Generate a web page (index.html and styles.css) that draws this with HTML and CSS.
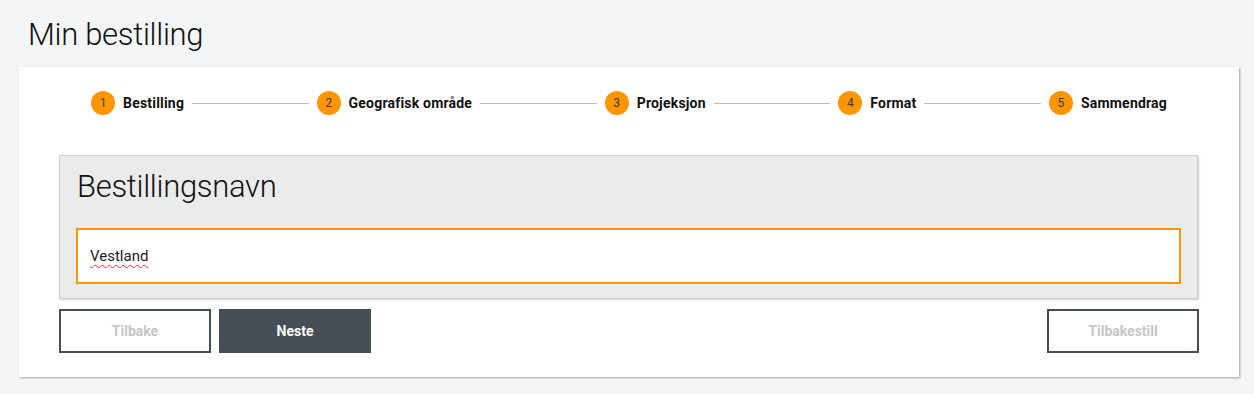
FILE: index.html
```html
<!DOCTYPE html>
<html lang="no">
<head>
<meta charset="utf-8">
<title>Min bestilling</title>
<link rel="stylesheet" href="styles.css">
</head>
<body>
<h1 class="page-title">Min bestilling</h1>
<div class="card">
  <ol class="stepper">
    <li class="step"><span class="num">1</span><span class="label">Bestilling</span></li>
    <li class="line"></li>
    <li class="step"><span class="num">2</span><span class="label">Geografisk område</span></li>
    <li class="line"></li>
    <li class="step"><span class="num">3</span><span class="label">Projeksjon</span></li>
    <li class="line"></li>
    <li class="step"><span class="num">4</span><span class="label">Format</span></li>
    <li class="line"></li>
    <li class="step"><span class="num">5</span><span class="label">Sammendrag</span></li>
  </ol>
  <section class="panel">
    <h2 class="panel-title">Bestillingsnavn</h2>
    <div class="field"><span class="value">Vestland</span></div>
  </section>
  <div class="actions">
    <button class="btn btn-outline">Tilbake</button>
    <button class="btn btn-solid">Neste</button>
    <span class="spacer"></span>
    <button class="btn btn-outline">Tilbakestill</button>
  </div>
</div>
</body>
</html>
```
FILE: styles.css
```css
html, body {
  margin: 0;
  padding: 0;
}
body {
  background: #f4f5f7;
  font-family: Roboto, "Liberation Sans", sans-serif;
  color: #111;
  width: 1254px;
  height: 394px;
  overflow: hidden;
}
.page-title {
  margin: 15px 0 12px 28px;
  font-weight: 300;
  font-size: 31px;
  letter-spacing: -0.3px;
  line-height: 40px;
  color: #111;
}
.card {
  margin: 0 15px 0 19px;
  background: #fff;
  box-shadow: 1px 1px 2px rgba(0,0,0,0.35);
  padding: 24px 40px 24px 40px;
}
.stepper {
  list-style: none;
  margin: 0 32px 40px 32px;
  padding: 0;
  display: flex;
  align-items: center;
  height: 24px;
}
.step {
  display: flex;
  align-items: center;
  gap: 8px;
}
.num {
  width: 24px;
  height: 24px;
  border-radius: 50%;
  background: #ff9600;
  color: #3a3a3a;
  font-size: 12px;
  display: flex;
  align-items: center;
  justify-content: center;
}
.label {
  font-weight: 700;
  font-size: 14px;
  letter-spacing: 0.2px;
  color: #111;
}
.line {
  flex: 1;
  height: 1px;
  background: #bdbdbd;
  margin: 0 8px;
}
.panel {
  background: #ebebeb;
  border: 1px solid #cfcfcf;
  box-shadow: 1px 1px 2px rgba(0,0,0,0.2);
  padding: 11px 16px 14px 16px;
  margin-right: 1px;
}
.panel-title {
  margin: 0 0 21px 1px;
  font-weight: 300;
  font-size: 31px;
  letter-spacing: -0.3px;
  line-height: 40px;
  color: #111;
}
.field {
  height: 52px;
  border: 2px solid #ff9600;
  background: #fff;
  display: flex;
  align-items: center;
  padding: 0 12px;
  font-size: 15px;
  color: #222;
}
.value {
  text-decoration: underline wavy #e03030;
  text-decoration-thickness: 1px;
  text-underline-offset: 3px;
}
.actions {
  display: flex;
  gap: 8px;
  margin-top: 10px;
}
.spacer {
  flex: 1;
}
.btn {
  width: 152px;
  height: 44px;
  font-family: Roboto, "Liberation Sans", sans-serif;
  font-weight: 700;
  font-size: 14px;
  cursor: pointer;
  margin: 0;
}
.btn-outline {
  background: #fff;
  border: 2px solid #444e55;
  color: #c6c6c6;
}
.btn-solid {
  background: #454f55;
  border: none;
  color: #fff;
}
```
